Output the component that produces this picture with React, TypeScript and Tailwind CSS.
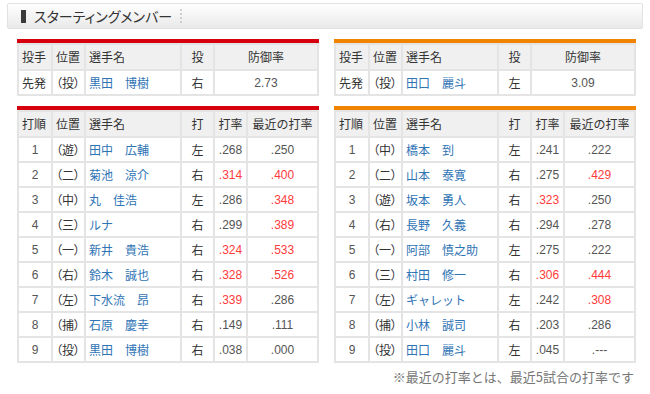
type Batter = { no: number; pos: string; name: string; hand: string; avg: string; avgHot?: boolean; recent: string; recentHot?: boolean };

const carpBatters: Batter[] = [
  { no: 1, pos: "（遊）", name: "田中　広輔", hand: "左", avg: ".268", recent: ".250" },
  { no: 2, pos: "（二）", name: "菊池　涼介", hand: "右", avg: ".314", avgHot: true, recent: ".400", recentHot: true },
  { no: 3, pos: "（中）", name: "丸　佳浩", hand: "左", avg: ".286", recent: ".348", recentHot: true },
  { no: 4, pos: "（三）", name: "ルナ", hand: "右", avg: ".299", recent: ".389", recentHot: true },
  { no: 5, pos: "（一）", name: "新井　貴浩", hand: "右", avg: ".324", avgHot: true, recent: ".533", recentHot: true },
  { no: 6, pos: "（右）", name: "鈴木　誠也", hand: "右", avg: ".328", avgHot: true, recent: ".526", recentHot: true },
  { no: 7, pos: "（左）", name: "下水流　昂", hand: "右", avg: ".339", avgHot: true, recent: ".286" },
  { no: 8, pos: "（捕）", name: "石原　慶幸", hand: "右", avg: ".149", recent: ".111" },
  { no: 9, pos: "（投）", name: "黒田　博樹", hand: "右", avg: ".038", recent: ".000" },
];

const giantsBatters: Batter[] = [
  { no: 1, pos: "（中）", name: "橋本　到", hand: "左", avg: ".241", recent: ".222" },
  { no: 2, pos: "（二）", name: "山本　泰寛", hand: "右", avg: ".275", recent: ".429", recentHot: true },
  { no: 3, pos: "（遊）", name: "坂本　勇人", hand: "右", avg: ".323", avgHot: true, recent: ".250" },
  { no: 4, pos: "（右）", name: "長野　久義", hand: "右", avg: ".294", recent: ".278" },
  { no: 5, pos: "（一）", name: "阿部　慎之助", hand: "左", avg: ".275", recent: ".222" },
  { no: 6, pos: "（三）", name: "村田　修一", hand: "右", avg: ".306", avgHot: true, recent: ".444", recentHot: true },
  { no: 7, pos: "（左）", name: "ギャレット", hand: "左", avg: ".242", recent: ".308", recentHot: true },
  { no: 8, pos: "（捕）", name: "小林　誠司", hand: "右", avg: ".203", recent: ".286" },
  { no: 9, pos: "（投）", name: "田口　麗斗", hand: "左", avg: ".045", recent: ".---" },
];

const th = "border-2 border-[#e4e4e4] bg-[#f0f0f0] font-normal h-[26px] px-[3px] whitespace-nowrap overflow-hidden";
const td = "border-2 border-[#e4e4e4] bg-white h-[25px] px-[3px] whitespace-nowrap overflow-hidden";
const num = "font-['Liberation_Sans',sans-serif] text-[12px] text-[#555]";
const paren = "[font-feature-settings:'palt']";

function PitcherTable({ bar, name, hand, era }: { bar: string; name: string; hand: string; era: string }) {
  return (
    <div>
      <div className={`h-[4px] ${bar}`} />
      <table className="w-[302px] border-collapse table-fixed">
        <colgroup>
          <col className="w-[34px]" />
          <col className="w-[33px]" />
          <col className="w-[96px]" />
          <col className="w-[33px]" />
          <col />
        </colgroup>
        <thead>
          <tr>
            <th className={`${th} text-left`}>投手</th>
            <th className={`${th} text-left`}>位置</th>
            <th className={`${th} text-left`}>選手名</th>
            <th className={`${th} text-center`}>投</th>
            <th className={`${th} text-center`}>防御率</th>
          </tr>
        </thead>
        <tbody>
          <tr>
            <td className={td}>先発</td>
            <td className={`${td} ${paren}`}>（投）</td>
            <td className={`${td} text-[#2f74b5] whitespace-pre`}>{name}</td>
            <td className={`${td} text-center`}>{hand}</td>
            <td className={`${td} text-center ${num}`}>{era}</td>
          </tr>
        </tbody>
      </table>
    </div>
  );
}

function BattingTable({ bar, rows }: { bar: string; rows: Batter[] }) {
  return (
    <div>
      <div className={`h-[4px] ${bar}`} />
      <table className="w-[302px] border-collapse table-fixed">
        <colgroup>
          <col className="w-[34px]" />
          <col className="w-[33px]" />
          <col className="w-[96px]" />
          <col className="w-[33px]" />
          <col className="w-[33px]" />
          <col />
        </colgroup>
        <thead>
          <tr>
            <th className={`${th} text-left`}>打順</th>
            <th className={`${th} text-left`}>位置</th>
            <th className={`${th} text-left`}>選手名</th>
            <th className={`${th} text-center`}>打</th>
            <th className={`${th} text-center`}>打率</th>
            <th className={`${th} text-center`}>最近の打率</th>
          </tr>
        </thead>
        <tbody>
          {rows.map((b) => (
            <tr key={b.no}>
              <td className={`${td} text-center ${num}`}>{b.no}</td>
              <td className={`${td} ${paren}`}>{b.pos}</td>
              <td className={`${td} text-[#2f74b5] whitespace-pre`}>{b.name}</td>
              <td className={`${td} text-center`}>{b.hand}</td>
              <td className={`${td} text-center ${num} ${b.avgHot ? "text-[#ff3b3b]" : ""}`}>{b.avg}</td>
              <td className={`${td} text-center ${num} ${b.recentHot ? "text-[#ff3b3b]" : ""}`}>{b.recent}</td>
            </tr>
          ))}
        </tbody>
      </table>
    </div>
  );
}

export default function App() {
  return (
    <div className="w-[650px] h-[394px] bg-white text-[12px] text-[#333] font-['Noto_Sans_CJK_JP',sans-serif] leading-none">
      <div className="pt-[3px] px-[7px]">
        <div className="h-[26px] flex items-center border border-[#e2e2e2] rounded-[2px] bg-gradient-to-b from-white to-[#e9e9e9]">
          <div className="ml-[13px] w-[5px] h-[13px] bg-[#3a3a3a]" />
          <span className="ml-[8px] text-[14px] text-[#333] [font-feature-settings:'palt']">スターティングメンバー</span>
          <div className="ml-[8px] h-[14px] border-l-2 border-dotted border-[#cfcfcf]" />
        </div>
      </div>

      <div className="pl-[17px] pt-[10px] flex gap-[15px]">
        <PitcherTable bar="bg-[#d7000f]" name="黒田　博樹" hand="右" era="2.73" />
        <PitcherTable bar="bg-[#f08300]" name="田口　麗斗" hand="左" era="3.09" />
      </div>

      <div className="pl-[17px] pt-[10px] flex gap-[15px]">
        <BattingTable bar="bg-[#d7000f]" rows={carpBatters} />
        <BattingTable bar="bg-[#f08300]" rows={giantsBatters} />
      </div>

      <p className="mt-[7px] pr-[16px] text-right text-[13px] text-[#777]">※最近の打率とは、最近5試合の打率です</p>
    </div>
  );
}
